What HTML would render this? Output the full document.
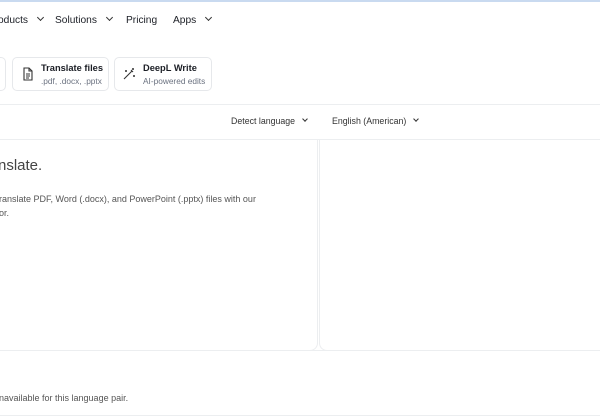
<!DOCTYPE html>
<html><head><meta charset="utf-8"><style>
*{margin:0;padding:0;box-sizing:border-box}
body{width:600px;height:420px;overflow:hidden;background:#fff;font-family:"Liberation Sans",Arial,sans-serif;color:#1a1a1a;position:relative}
.abs{position:absolute;white-space:nowrap}
.nav{top:15px;font-size:10.2px;color:#1b1e25}
.chev{display:inline-block;width:5px;height:5px;border-right:1.3px solid #333;border-bottom:1.3px solid #333;transform:rotate(45deg);margin-left:10px;position:relative;top:-3px}
.btn{top:57px;height:34px;border:1px solid #e6e8eb;border-radius:5px;background:#fff}
.t1{font-size:9.3px;font-weight:bold;color:#1b1e25}
.t2{font-size:8.3px;color:#6b7280}
.hl{position:absolute;left:0;width:600px;height:1px;background:#eceef0}
</style></head><body>
<div class="abs" style="top:0;left:0;width:600px;height:2px;background:#c9daf0"></div>
<div class="abs nav" style="left:-2px">oducts<span class="chev"></span></div>
<div class="abs nav" style="left:55px">Solutions<span class="chev"></span></div>
<div class="abs nav" style="left:126px">Pricing</div>
<div class="abs nav" style="left:173px">Apps<span class="chev"></span></div>

<div class="abs btn" style="left:-10px;width:16px"></div>
<div class="abs btn" style="left:12px;width:97px"></div>
<svg class="abs" style="left:22px;top:67px" width="12" height="14" viewBox="0 0 12 14"><path d="M2 1h5l3 3v9H2z M7 1v3h3 M4 7h4 M4 9h4 M4 11h3" fill="none" stroke="#333" stroke-width="1.1"/></svg>
<div class="abs t1" style="left:41px;top:63px">Translate files</div>
<div class="abs t2" style="left:41px;top:76px">.pdf, .docx, .pptx</div>
<div class="abs btn" style="left:114px;width:98px"></div>
<svg class="abs" style="left:123px;top:67px" width="13" height="13" viewBox="0 0 13 13"><path d="M1 12L9 4M8 3l2 2M10 1v2M11 2H9M3 3v2M4 4H2M11 8v2M12 9h-2" fill="none" stroke="#333" stroke-width="1.1"/></svg>
<div class="abs t1" style="left:143px;top:63px">DeepL Write</div>
<div class="abs t2" style="left:143px;top:76px">AI-powered edits</div>

<div class="hl" style="top:104px"></div>
<div class="abs" style="left:231px;top:116px;font-size:8.8px;color:#333">Detect language<span class="chev" style="width:4px;height:4px;margin-left:8px"></span></div>
<div class="abs" style="left:332px;top:116px;font-size:8.8px;color:#333">English (American)<span class="chev" style="width:4px;height:4px;margin-left:8px"></span></div>
<div class="hl" style="top:139px"></div>
<div class="abs" style="left:-10px;top:139px;width:328px;height:212px;border:1px solid #eceef0;border-top:none;border-radius:0 0 8px 0"></div>
<div class="abs" style="left:319px;top:139px;width:300px;height:212px;border:1px solid #eceef0;border-top:none;border-radius:0 0 0 8px"></div>
<div class="abs" style="left:-2px;top:157px;font-size:15px;color:#444">nslate.</div>
<div class="abs" style="left:-1px;top:192px;font-size:9px;color:#555;line-height:14px">ranslate PDF, Word (.docx), and PowerPoint (.pptx) files with our<br>or.</div>
<div class="hl" style="top:350px"></div>
<div class="abs" style="left:-1px;top:393px;font-size:9px;color:#555">navailable for this language pair.</div>
<div class="hl" style="top:415px"></div>
</body></html>
